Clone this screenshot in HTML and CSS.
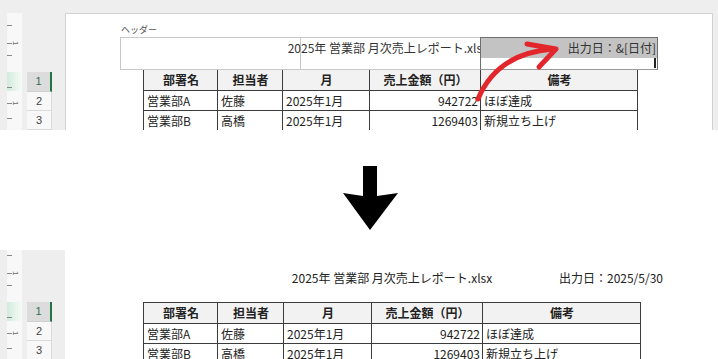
FILE: index.html
```html
<!DOCTYPE html>
<html lang="ja">
<head>
<meta charset="utf-8">
<title>ヘッダー 出力日</title>
<link rel="stylesheet" href="styles.css">
</head>
<body>
<section class="sheet sheet-top">
  <div class="ruler">
    <svg width="15" height="117" viewBox="0 0 15 117">
      <defs>
        <linearGradient id="g1" x1="0" x2="1" y1="0" y2="0">
          <stop offset="0" stop-color="#d3ebdd"/>
          <stop offset="1" stop-color="#f7fbf8"/>
        </linearGradient>
      </defs>
      <rect x="0" y="59" width="15" height="19" fill="url(#g1)"/>
      <g stroke="#8a8a8a" stroke-width="1">
        <line x1="0" y1="12.5" x2="5" y2="12.5"/>
        <line x1="0" y1="30.5" x2="5" y2="30.5"/>
        <line x1="0" y1="42.5" x2="5" y2="42.5"/>
        <line x1="0" y1="74.5" x2="5" y2="74.5"/>
        <line x1="0" y1="90.5" x2="5" y2="90.5"/>
        <line x1="0" y1="105.5" x2="5" y2="105.5"/>
      </g>
      <g fill="#666" font-size="8" font-family="Liberation Sans, sans-serif">
        <text transform="translate(6 28) rotate(90)">1</text>
        <text transform="translate(6 88) rotate(90)">1</text>
      </g>
    </svg>
  </div>
  <div class="rowhdr rowhdr-top">
    <div class="rh sel">1</div>
    <div class="rh">2</div>
    <div class="rh">3</div>
  </div>
  <div class="page page-top">
    <div class="hlabel">ヘッダー</div>
    <div class="hdrbox">
      <div class="hsec hsec-left"></div>
      <div class="hsec hsec-center"><span>2025年 営業部 月次売上レポート.xlsx</span></div>
      <div class="hsec hsec-right">
        <div class="hfill">出力日：&amp;[日付]</div>
        <div class="hblank"><span class="caret"></span></div>
      </div>
    </div>
    <table class="data data-top">
      <colgroup><col class="c1"><col class="c2"><col class="c3"><col class="c4"><col class="c5"></colgroup>
      <tr class="head"><th>部署名</th><th>担当者</th><th>月</th><th>売上金額（円）</th><th>備考</th></tr>
      <tr><td>営業部A</td><td>佐藤</td><td>2025年1月</td><td class="num">942722</td><td>ほぼ達成</td></tr>
      <tr><td>営業部B</td><td>高橋</td><td>2025年1月</td><td class="num">1269403</td><td>新規立ち上げ</td></tr>
    </table>
  </div>
  <svg class="redarrow" width="718" height="130" viewBox="0 0 718 130">
    <g fill="none" stroke="#e3262b" stroke-width="5" stroke-linecap="round" stroke-linejoin="round">
      <path d="M478 99 C490 70 514 52 553 49"/>
      <path d="M527 44 L556 49 L539 67"/>
    </g>
  </svg>
</section>

<section class="middle">
  <svg width="56" height="66" viewBox="0 0 56 66">
    <polygon points="20,1 34,1 34,31 55,28 27,65 0,28 20,31" fill="#000"/>
  </svg>
</section>

<section class="sheet sheet-bottom">
  <div class="ruler">
    <svg width="15" height="109" viewBox="0 0 15 109">
      <defs>
        <linearGradient id="g2" x1="0" x2="1" y1="0" y2="0">
          <stop offset="0" stop-color="#d3ebdd"/>
          <stop offset="1" stop-color="#f7fbf8"/>
        </linearGradient>
      </defs>
      <rect x="0" y="52" width="15" height="19" fill="url(#g2)"/>
      <g stroke="#8a8a8a" stroke-width="1">
        <line x1="0" y1="5.5" x2="5" y2="5.5"/>
        <line x1="0" y1="23.5" x2="5" y2="23.5"/>
        <line x1="0" y1="35.5" x2="5" y2="35.5"/>
        <line x1="0" y1="67.5" x2="5" y2="67.5"/>
        <line x1="0" y1="83.5" x2="5" y2="83.5"/>
        <line x1="0" y1="98.5" x2="5" y2="98.5"/>
      </g>
      <g fill="#666" font-size="8" font-family="Liberation Sans, sans-serif">
        <text transform="translate(6 21) rotate(90)">1</text>
        <text transform="translate(6 81) rotate(90)">1</text>
      </g>
    </svg>
  </div>
  <div class="rowhdr rowhdr-bottom">
    <div class="rh sel">1</div>
    <div class="rh">2</div>
    <div class="rh">3</div>
  </div>
  <div class="page page-bottom">
    <div class="phdr">
      <div class="ph-left"></div>
      <div class="ph-center"><span>2025年 営業部 月次売上レポート.xlsx</span></div>
      <div class="ph-right">出力日：2025/5/30</div>
    </div>
    <table class="data data-bottom">
      <colgroup><col class="c1"><col class="c2"><col class="c3"><col class="c4"><col class="c5"></colgroup>
      <tr class="head"><th>部署名</th><th>担当者</th><th>月</th><th>売上金額（円）</th><th>備考</th></tr>
      <tr><td>営業部A</td><td>佐藤</td><td>2025年1月</td><td class="num">942722</td><td>ほぼ達成</td></tr>
      <tr><td>営業部B</td><td>高橋</td><td>2025年1月</td><td class="num">1269403</td><td>新規立ち上げ</td></tr>
    </table>
  </div>
</section>
</body>
</html>
```

FILE: styles.css
```css
* { box-sizing: border-box; }
html, body { margin: 0; padding: 0; }
body {
  width: 718px;
  height: 359px;
  overflow: hidden;
  background: #ffffff;
  font-family: "Noto Sans CJK JP", "Noto Sans", sans-serif;
  color: #222;
}

.sheet {
  display: flex;
  align-items: stretch;
  background: #eeeeee;
  position: relative;
  overflow: hidden;
}
.sheet-top { height: 130px; padding-top: 13px; }
.sheet-bottom { height: 109px; }

.ruler {
  width: 15px;
  margin-left: 7px;
  background: #f8f8f8;
  flex: none;
}
.ruler svg { display: block; }

.rowhdr {
  width: 25px;
  margin-left: 5px;
  display: flex;
  flex-direction: column;
  flex: none;
}
.rowhdr-top { padding-top: 59px; }
.rowhdr-bottom { padding-top: 52px; }
.rh {
  height: 19px;
  line-height: 18px;
  font-size: 11px;
  font-family: "Liberation Sans", sans-serif;
  text-align: center;
  color: #444;
  background: #f8f8f8;
  border-bottom: 1px solid #dadada;
  border-right: 1px solid #dadada;
}
.rh.sel {
  height: 20px;
  line-height: 19px;
  background: #dcdcdc;
  color: #2f6e50;
  border-right: 2px solid #217346;
  border-bottom: 1px solid #d0d0d0;
}

.page {
  flex: 1;
  background: #ffffff;
  margin-left: 13px;
}
.page-top {
  margin-right: 5px;
  border: 1px solid #d2d2d2;
  border-bottom: 0;
  padding-left: 54px;
}
.page-bottom {
  padding-left: 55px;
}

.hlabel {
  font-size: 9px;
  line-height: 12px;
  margin-top: 10px;
  margin-bottom: 1px;
  padding-left: 1px;
  color: #555;
}

.hdrbox {
  display: flex;
  height: 33px;
}
.hsec { height: 33px; }
.hsec-left {
  width: 181px;
  border: 1px solid #c8c8c8;
}
.hsec-center {
  width: 179px;
  border-top: 1px solid #c8c8c8;
  border-bottom: 1px solid #c8c8c8;
  display: flex;
  justify-content: flex-end;
  white-space: nowrap;
  font-size: 12px;
  line-height: 20px;
  color: #333;
}
.hsec-center span { margin-right: -8px; }
.hsec-right {
  width: 178px;
  border: 1px solid #6f6f6f;
  border-bottom-color: #9a9a9a;
  display: flex;
  flex-direction: column;
  position: relative;
  z-index: 1;
  background: #ffffff;
}
.hfill {
  height: 20px;
  background: #c3c3c3;
  text-align: right;
  padding-right: 1px;
  font-size: 12px;
  line-height: 20px;
  color: #333;
  white-space: nowrap;
}
.hblank {
  flex: 1;
  display: flex;
  justify-content: flex-end;
  padding: 0 1px 1px 0;
}
.caret {
  width: 2px;
  background: #222;
}

.data {
  border-collapse: collapse;
  table-layout: fixed;
  margin-left: 23px;
  font-size: 12px;
  color: #222;
}
.data-top { width: 494px; margin-top: -1px; }
.data-bottom { width: 497px; margin-top: 16px; }
.data-top .c1 { width: 74px; }
.data-top .c2 { width: 65px; }
.data-top .c3 { width: 87px; }
.data-top .c4 { width: 111px; }
.data-top .c5 { width: 157px; }
.data-bottom .c1 { width: 74px; }
.data-bottom .c2 { width: 66px; }
.data-bottom .c3 { width: 88px; }
.data-bottom .c4 { width: 111px; }
.data-bottom .c5 { width: 158px; }

.data th, .data td {
  border: 1px solid #3c3c3c;
  height: 20px;
  line-height: 18px;
  padding: 0 2px 0 3px;
  white-space: nowrap;
  overflow: hidden;
  text-align: left;
  font-weight: normal;
}
.data .head th {
  height: 21px;
  background: #f2f2f2;
  text-align: center;
  font-weight: bold;
}
.data td.num { text-align: right; padding-right: 2px; }

.redarrow {
  position: absolute;
  left: 0;
  top: 0;
  pointer-events: none;
  z-index: 5;
}

.middle {
  height: 120px;
  padding-top: 35px;
  padding-left: 343px;
}
.middle svg { display: block; }

.phdr {
  display: flex;
  padding-top: 20px;
  font-size: 12px;
  line-height: 16px;
  color: #222;
  white-space: nowrap;
}
.ph-left { width: 180px; }
.ph-center {
  width: 180px;
  display: flex;
  justify-content: center;
  padding-left: 4px;
}
.ph-right {
  width: 183px;
  text-align: right;
}
```
